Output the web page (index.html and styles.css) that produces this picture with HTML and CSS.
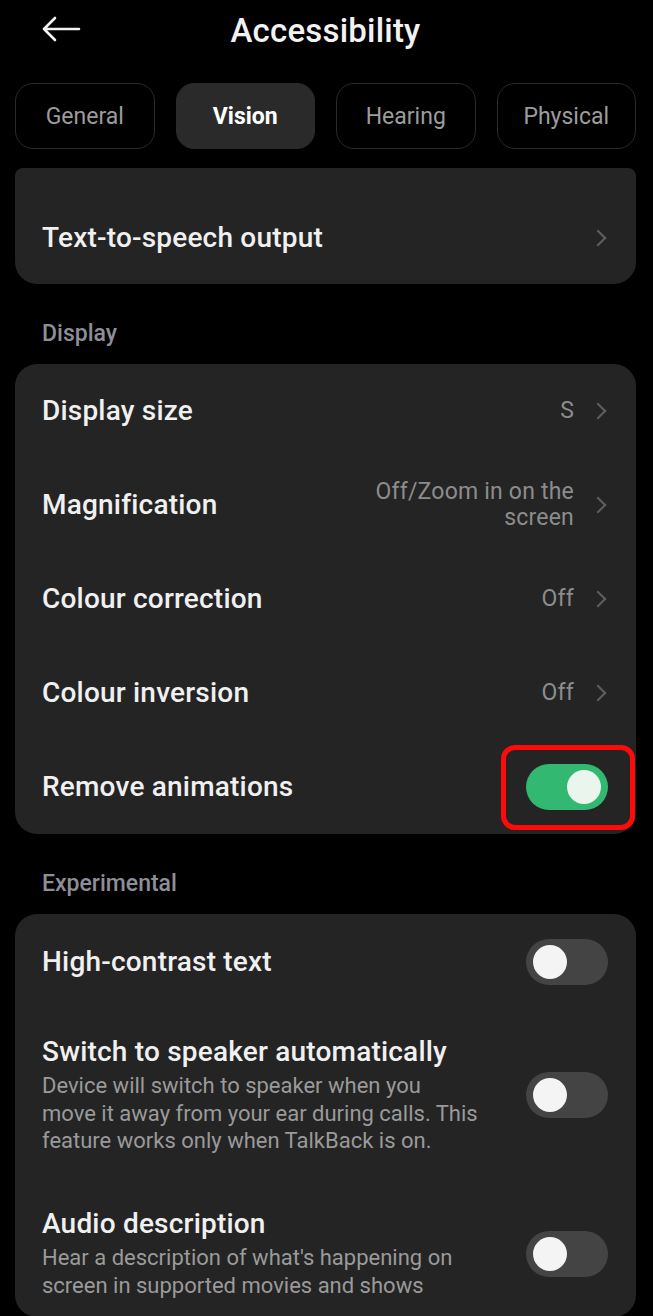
FILE: index.html
```html
<!DOCTYPE html>
<html lang="en">
<head>
    <meta charset="UTF-8">
    <meta name="viewport" content="width=device-width, initial-scale=1.0">
    <title>Accessibility</title>
    <link rel="stylesheet" href="styles.css">
</head>
<body>
    <header class="topbar">
        <a class="back" href="#">
            <svg width="40" height="26" viewBox="0 0 40 26">
                <path d="M38 13 H3 M14 2 L3 13 L14 24" fill="none" stroke="#f2f2f2" stroke-width="2.6" stroke-linecap="round" stroke-linejoin="round"/>
            </svg>
        </a>
        <h1>Accessibility</h1>
    </header>

    <nav class="tabs">
        <a href="#" class="tab">General</a>
        <a href="#" class="tab active">Vision</a>
        <a href="#" class="tab">Hearing</a>
        <a href="#" class="tab">Physical</a>
    </nav>

    <div class="card card-top">
        <div class="row">
            <span class="title">Text-to-speech output</span>
            <span class="end"><span class="chevron"></span></span>
        </div>
    </div>

    <div class="section-label">Display</div>
    <div class="card">
        <div class="row">
            <span class="title">Display size</span>
            <span class="end"><span class="value">S</span><span class="chevron"></span></span>
        </div>
        <div class="row">
            <span class="title">Magnification</span>
            <span class="end"><span class="value">Off/Zoom in on the<br>screen</span><span class="chevron"></span></span>
        </div>
        <div class="row">
            <span class="title">Colour correction</span>
            <span class="end"><span class="value">Off</span><span class="chevron"></span></span>
        </div>
        <div class="row">
            <span class="title">Colour inversion</span>
            <span class="end"><span class="value">Off</span><span class="chevron"></span></span>
        </div>
        <div class="row">
            <span class="title">Remove animations</span>
            <span class="switch on"><span class="highlight"></span></span>
        </div>
    </div>

    <div class="section-label">Experimental</div>
    <div class="card card-last">
        <div class="row">
            <span class="title">High-contrast text</span>
            <span class="switch"></span>
        </div>
        <div class="row row-desc">
            <div class="text">
                <div class="title">Switch to speaker automatically</div>
                <div class="desc">Device will switch to speaker when you<br>move it away from your ear during calls. This feature works only when TalkBack is on.</div>
            </div>
            <span class="switch"></span>
        </div>
        <div class="row row-desc">
            <div class="text">
                <div class="title">Audio description</div>
                <div class="desc">Hear a description of what's happening on screen in supported movies and shows</div>
            </div>
            <span class="switch"></span>
        </div>
    </div>
</body>
</html>
```

FILE: styles.css
```css
body {
    margin: 0;
    padding: 0 17px 0 15px;
    background: #000;
    color: #f0f0f0;
    font-family: Roboto, "Noto Sans", sans-serif;
    overflow: hidden;
}
.topbar {
    height: 60px;
    display: flex;
    align-items: center;
    justify-content: center;
    position: relative;
}
.topbar h1 {
    margin: 0;
    font-size: 33px;
    font-weight: 500;
    letter-spacing: 0.2px;
    color: #f2f2f2;
}
.back {
    position: absolute;
    left: 26px;
    top: 16px;
}
.tabs {
    display: grid;
    grid-template-columns: repeat(4, 1fr);
    gap: 21px;
    margin-top: 23px;
}
.tab {
    height: 64px;
    display: flex;
    align-items: center;
    justify-content: center;
    border: 1px solid #2a2a2a;
    border-radius: 18px;
    color: #9c9c9c;
    font-size: 23px;
    text-decoration: none;
}
.tab.active {
    background: #2a2a2a;
    color: #fff;
    font-weight: 700;
}
.card {
    background: #242424;
    border-radius: 22px;
    padding: 0 28px 0 27px;
}
.card-top {
    margin-top: 19px;
    border-radius: 8px 8px 22px 22px;
    padding-top: 54px;
    padding-bottom: 30px;
}
.card-top .row {
    min-height: 32px;
}
.section-label {
    padding: 37px 0 17px 27px;
    font-size: 23px;
    line-height: 26px;
    font-weight: 500;
    color: #8e8e98;
}
.row {
    min-height: 94px;
    display: flex;
    align-items: center;
    justify-content: space-between;
}
.title {
    font-size: 28px;
    line-height: 32px;
    font-weight: 500;
    letter-spacing: 0.2px;
    color: #f0f0f0;
}
.end {
    display: flex;
    align-items: center;
    gap: 18px;
}
.value {
    font-size: 23px;
    line-height: 26px;
    letter-spacing: 0.2px;
    color: #8c8c8c;
    text-align: right;
}
.chevron {
    width: 10px;
    height: 10px;
    border-top: 2px solid #5e5e5e;
    border-right: 2px solid #5e5e5e;
    transform: rotate(45deg);
    margin-right: 4px;
}
.switch {
    position: relative;
    flex: none;
    width: 82px;
    height: 46px;
    border-radius: 23px;
    background: #444;
}
.switch::after {
    content: "";
    position: absolute;
    top: 6px;
    left: 7px;
    width: 34px;
    height: 34px;
    border-radius: 50%;
    background: #f4f4f4;
}
.switch.on {
    background: #33b871;
}
.switch.on::after {
    left: auto;
    right: 7px;
    background: #eaf5ee;
}
.highlight {
    position: absolute;
    top: -19px;
    bottom: -20px;
    left: -25px;
    right: -27px;
    border: 5px solid #ff0a0a;
    border-radius: 14px;
}
.card-last .row:first-child {
    min-height: 96px;
}
.row-desc {
    padding: 26px 0;
    gap: 16px;
}
.card-last .row-desc:last-child {
    padding-bottom: 16px;
}
.desc {
    margin-top: 4px;
    font-size: 22px;
    line-height: 27.5px;
    color: #9a9a9a;
}
```
